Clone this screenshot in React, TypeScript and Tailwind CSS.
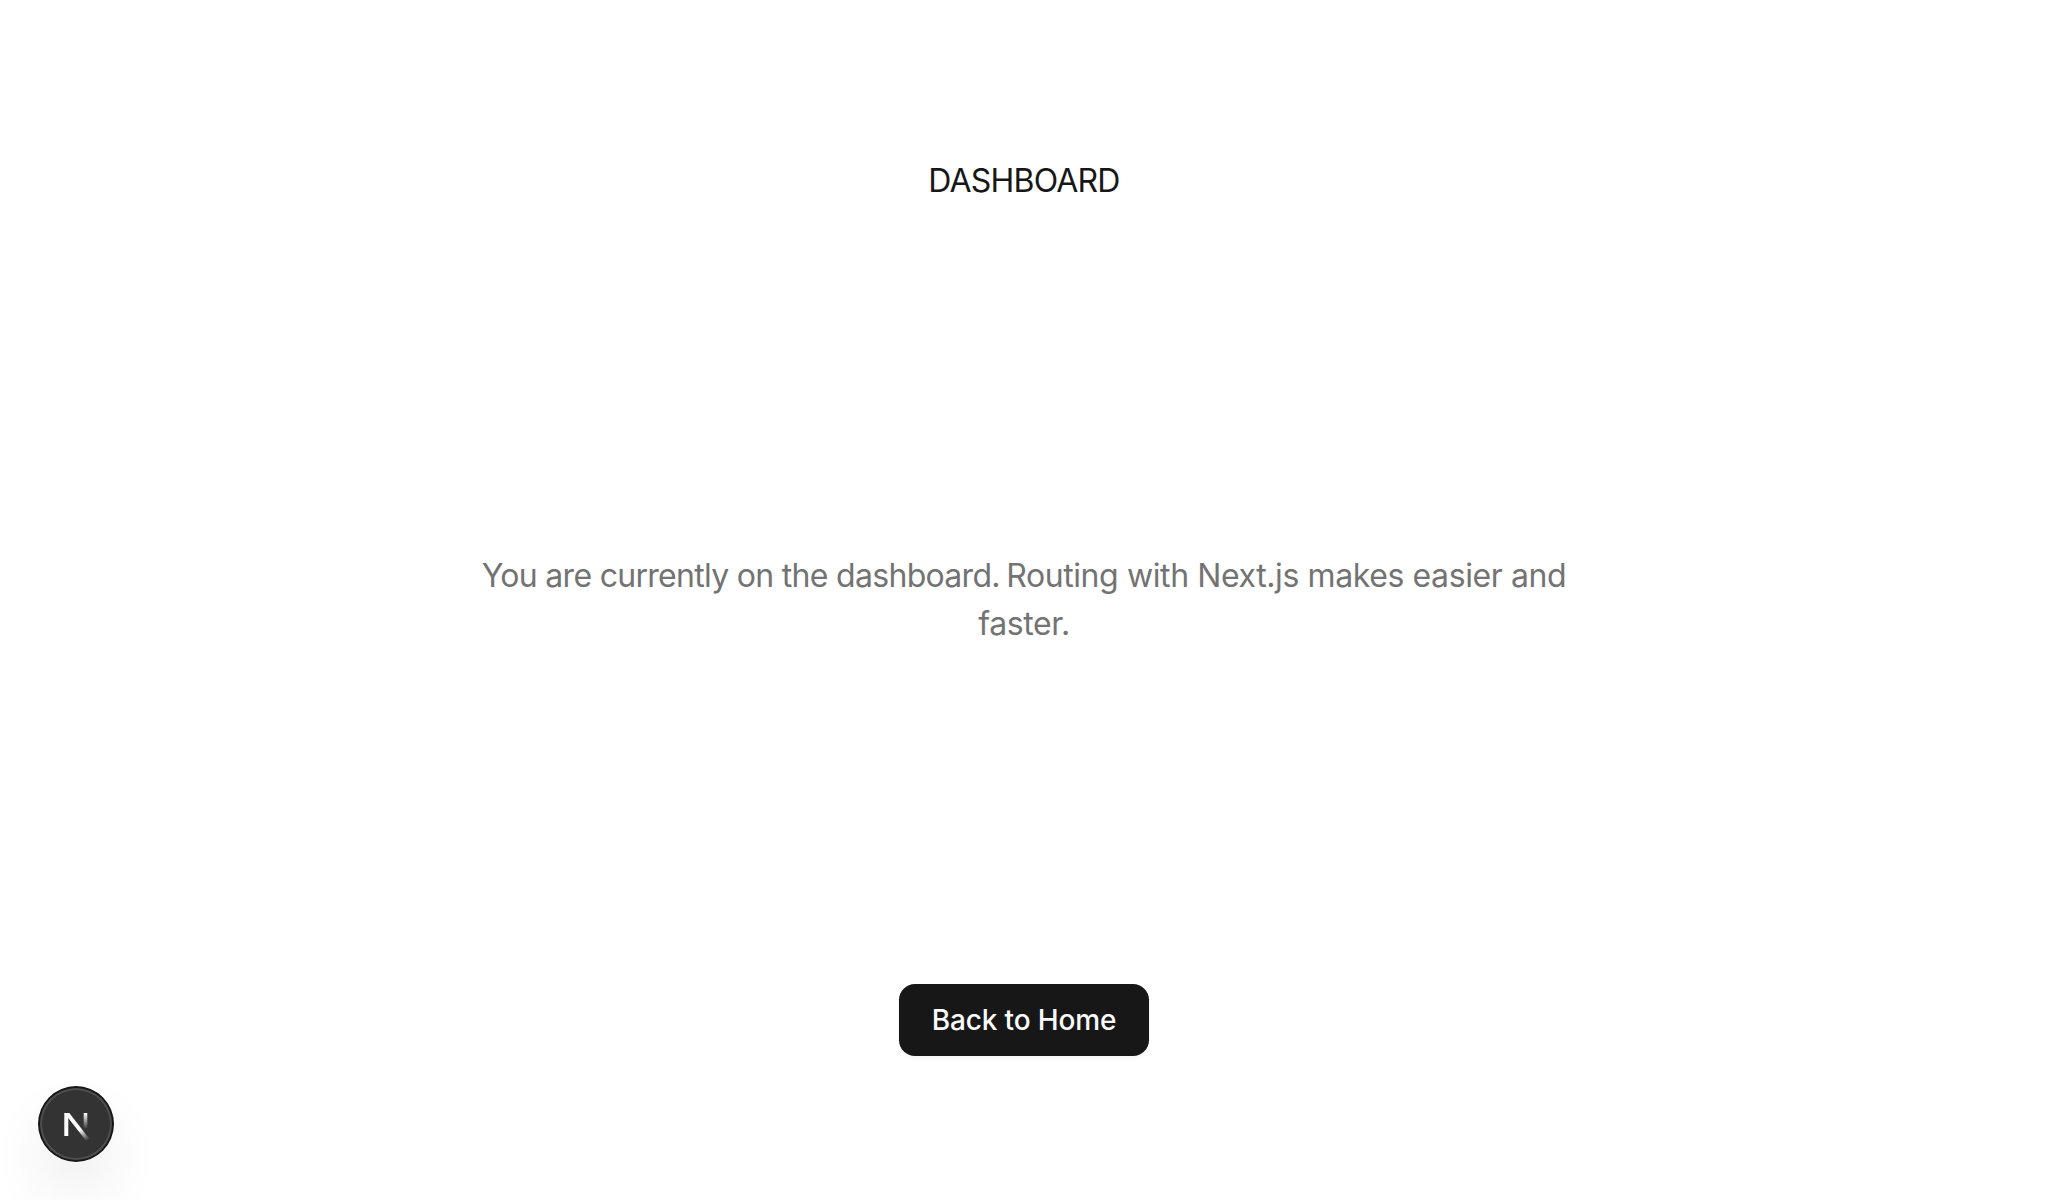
import React from "react";

function NextBadge() {
  return (
    <div className="fixed bottom-10 left-10 flex size-18 items-center justify-center rounded-full bg-[#333333] shadow-[0_0_0_2px_#171717,inset_0_0_0_2px_rgba(255,255,255,0.14),0_32px_64px_-16px_rgba(0,0,0,0.24)]">
      <svg width="72" height="72" viewBox="0 0 72 72" fill="none">
        <defs>
          <linearGradient id="diagonal" x1="41" y1="41" x2="49" y2="51.5" gradientUnits="userSpaceOnUse">
            <stop stopColor="white" />
            <stop offset="1" stopColor="white" stopOpacity="0" />
          </linearGradient>
          <linearGradient id="stem" x1="46" y1="25" x2="46" y2="41" gradientUnits="userSpaceOnUse">
            <stop stopColor="white" />
            <stop offset="1" stopColor="white" stopOpacity="0" />
          </linearGradient>
        </defs>
        <path d="M24.3 25H28.3V48H24.3Z" fill="white" />
        <path d="M24.3 25H29.3L49.5 51L46.3 53Z" fill="url(#diagonal)" />
        <path d="M43.7 25H47.3V41H43.7Z" fill="url(#stem)" />
      </svg>
    </div>
  );
}

export default function App() {
  return (
    <main className="flex h-[1200px] flex-col items-center bg-white pt-[157px] font-['Inter','Liberation_Sans',sans-serif] text-[32px] leading-[48px] text-[#171717]">
      <h1 className="tracking-[-0.8px]">DASHBOARD</h1>
      <p className="mt-[347px] w-[1120px] text-center tracking-[-0.7px] text-[#737373]">
        You are currently on the dashboard.{" "}
        <span className="-ml-0.5 tracking-[-0.4px]">Routing with Next.js makes easier and faster.</span>
      </p>
      <button className="mt-[336px] flex h-18 w-[250px] items-center justify-center rounded-2xl bg-[#171717] text-[28px] font-medium leading-10 tracking-[-0.16px] text-neutral-50 shadow-[0_2px_4px_rgba(0,0,0,0.05)]">
        Back to Home
      </button>
      <NextBadge />
    </main>
  );
}
